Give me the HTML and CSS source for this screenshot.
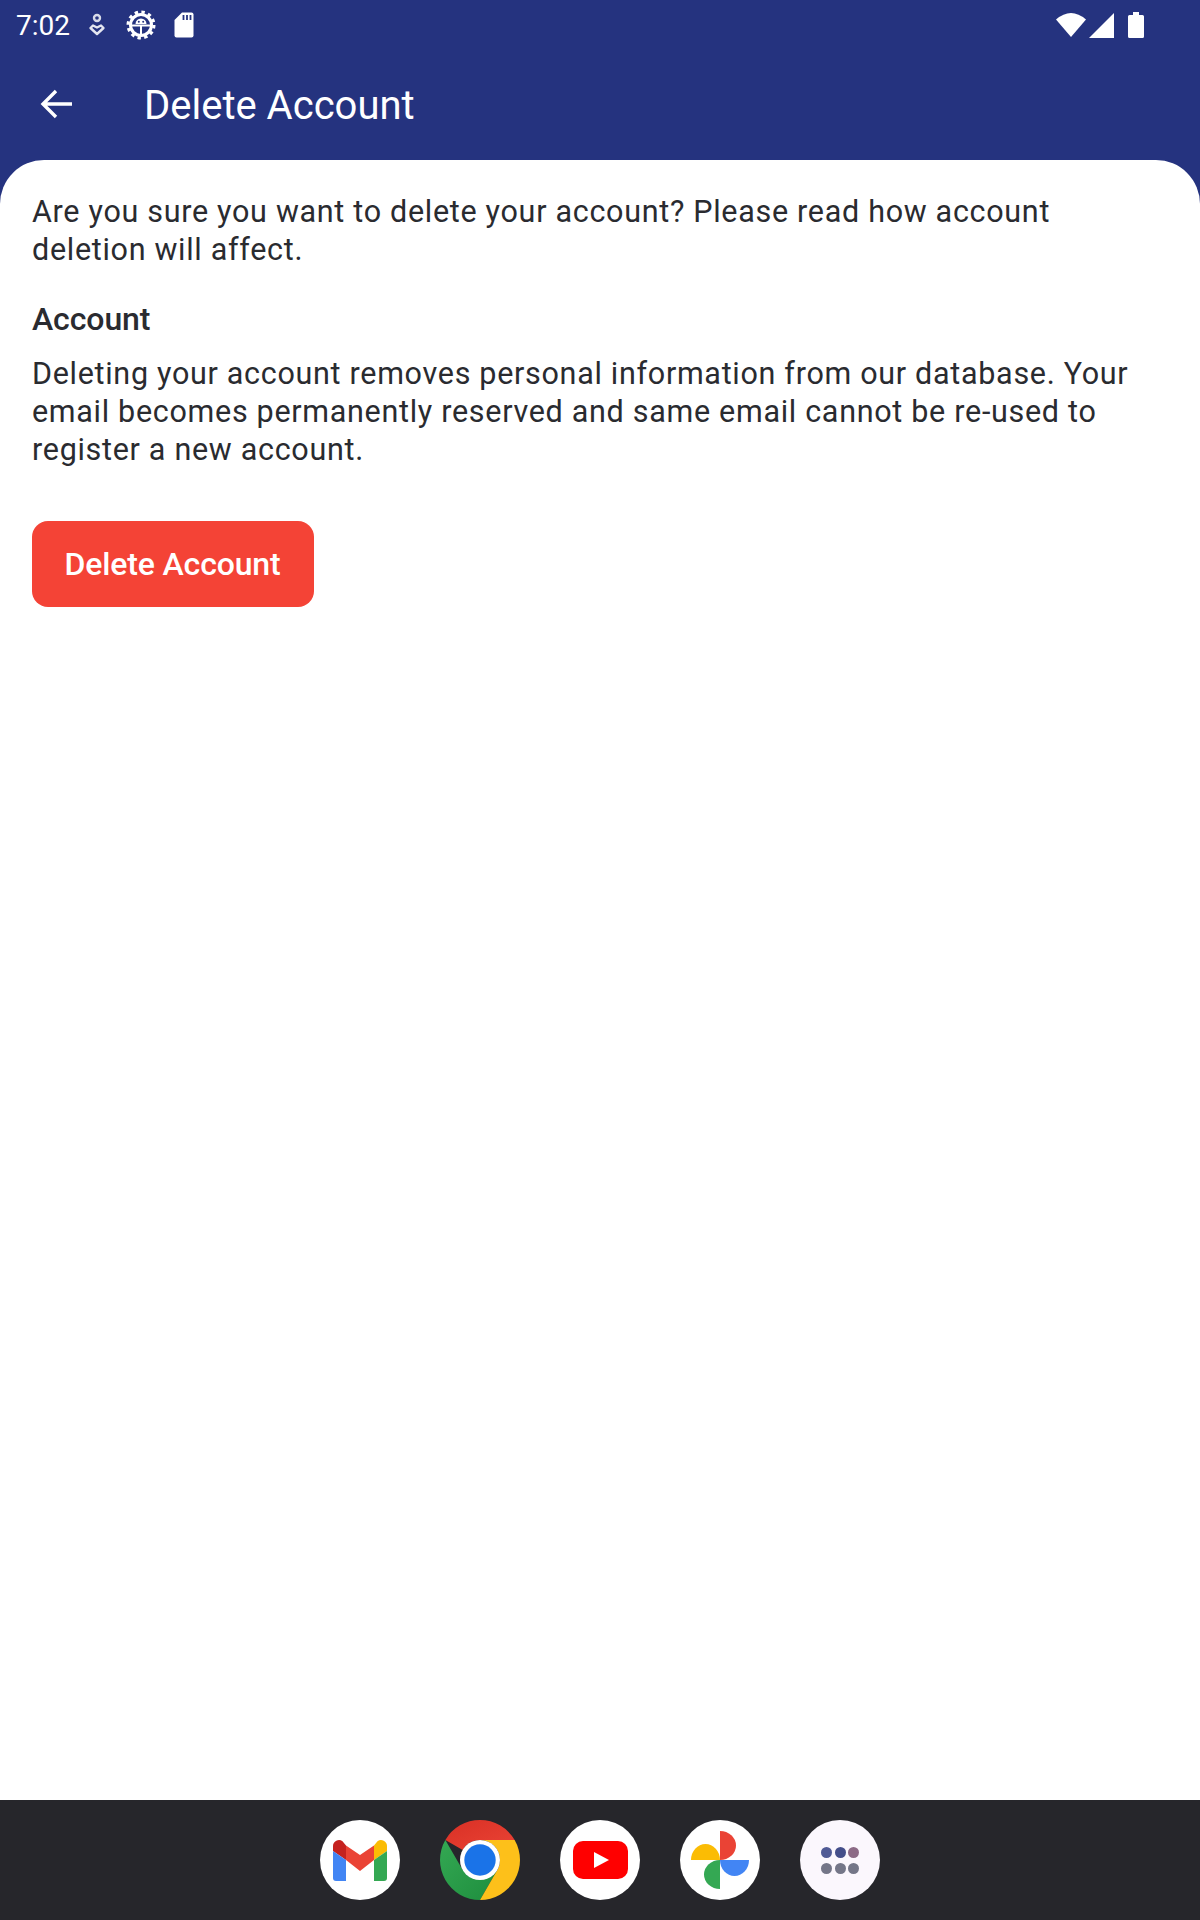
FILE: index.html
```html
<!DOCTYPE html>
<html lang="en">
<head>
<meta charset="utf-8">
<title>Delete Account</title>
<link rel="stylesheet" href="styles.css">
</head>
<body>
<div class="screen">
  <header class="top">
    <div class="status">
      <div class="status-left">
        <span class="time">7:02</span>
        <svg class="ic-drop" width="18" height="24" viewBox="0 0 18 24"><circle cx="9" cy="5" r="3" fill="none" stroke="#d8dbe9" stroke-width="2.4"/><path d="M5 12.5 L9 14.5 L13 12.5 L15.5 15 L9 21 L2.5 15 Z" fill="none" stroke="#e4e6f0" stroke-width="2.4" stroke-linejoin="round"/></svg>
        <svg class="ic-gear" width="30" height="30" viewBox="0 0 30 30"><circle cx="15" cy="15" r="10.500" fill="none" stroke="#fff" stroke-width="3"/><circle cx="15" cy="15" r="13" fill="none" stroke="#fff" stroke-width="3" stroke-dasharray="3.400 3.407"/><path d="M9.500 14a5.500 5.500 0 0 1 11 0z" fill="#fff"/><path d="M6 15.500h18M15 15.500v9" stroke="#fff" stroke-width="2"/><circle cx="12.800" cy="11.800" r="1" fill="#25337f"/><circle cx="17.200" cy="11.800" r="1" fill="#25337f"/></svg>
        <svg class="ic-sd" width="20" height="26" viewBox="0 0 20 26"><path d="M8 0.500H17.500A2 2 0 0 1 19.500 2.500V23.500A2 2 0 0 1 17.500 25.500H2.500A2 2 0 0 1 .5 23.500V8Z" fill="#fff"/><path d="M9.500 3v5M13 3v5M16.500 3v5" stroke="#25337f" stroke-width="1.800"/></svg>
      </div>
      <div class="status-right">
        <svg width="30" height="26" viewBox="0 0 30 26"><path d="M0 7.500Q15 -5.500 30 7.500L15 25Z" fill="#fff"/></svg>
        <svg width="25" height="25" viewBox="0 0 25 25"><path d="M25 0V25H0Z" fill="#fff"/></svg>
        <svg class="ic-batt" width="16" height="26" viewBox="0 0 16 26"><path d="M5 0H11V3H14.500A1.500 1.500 0 0 1 16 4.500V24.500A1.500 1.500 0 0 1 14.500 26H1.500A1.500 1.500 0 0 1 0 24.500V4.500A1.500 1.500 0 0 1 1.500 3H5Z" fill="#fff"/></svg>
      </div>
    </div>
    <div class="appbar">
      <svg class="back" width="32" height="32" viewBox="0 0 32 32"><path d="M33 16H3M16 3L3 16L16 29" fill="none" stroke="#fff" stroke-width="3.400"/></svg>
      <h1 class="title">Delete Account</h1>
    </div>
  </header>
  <main class="card">
    <p class="text">Are you sure you want to delete your account? Please read how account deletion will affect.</p>
    <h2 class="heading">Account</h2>
    <p class="text">Deleting your account removes personal information from our database. Your email becomes permanently reserved and same email cannot be re-used to register a new account.</p>
    <button class="danger" type="button">Delete Account</button>
  </main>
  <footer class="dock">
    <span class="app">
      <svg width="54" height="41" viewBox="0 0 54 41"><path d="M0 6a6 6 0 0 1 9.500-4.800L13 5.500V20L0 11Z" fill="#c5221f"/><path d="M13 5.500L27 15 41 5.500V20L27 31 13 20Z" fill="#ea4335"/><path d="M54 6a6 6 0 0 0-9.500-4.800L41 5.500V20L54 11Z" fill="#fbbc04"/><path d="M0 11L13 20V41H3a3 3 0 0 1-3-3Z" fill="#4285f4"/><path d="M54 11L41 20V41H51a3 3 0 0 0 3-3Z" fill="#34a853"/></svg>
    </span>
    <span class="app app-chrome">
      <svg width="80" height="80" viewBox="0 0 80 80"><defs><linearGradient id="cr" x1="0" y1="0" x2="1" y2="1"><stop offset="0" stop-color="#d93025"/><stop offset="1" stop-color="#ea4335"/></linearGradient><linearGradient id="cg" x1="0" y1="0" x2="1" y2="1"><stop offset="0" stop-color="#34a853"/><stop offset="1" stop-color="#1e8e3e"/></linearGradient></defs><path d="M40 0A40 40 0 0 1 74.640 20H40A20 20 0 0 0 22.700 30L5.360 20A40 40 0 0 1 40 0Z" fill="url(#cr)"/><path d="M5.360 20L22.700 50 57.300 50 40 80A40 40 0 0 1 5.360 20Z" fill="url(#cg)"/><path d="M74.640 20A40 40 0 0 1 40 80L57.300 50A20 20 0 0 0 40 20Z" fill="#fdc01a"/><circle cx="40" cy="40" r="20" fill="#fff"/><circle cx="40" cy="40" r="15.700" fill="#1a73e8"/></svg>
    </span>
    <span class="app">
      <svg width="55" height="40" viewBox="0 0 55 40"><rect width="55" height="38" y="1" rx="10" fill="#ff0000"/><path d="M21 12L36 20L21 28Z" fill="#fff"/></svg>
    </span>
    <span class="app">
      <svg width="58" height="58" viewBox="0 0 58 58"><path d="M29 29V0a16 14.500 0 0 1 0 29Z" fill="#ea4335"/><path d="M29 29H58a14.500 16 0 0 1-29 0Z" fill="#4285f4"/><path d="M29 29V58a16 14.500 0 0 1 0-29Z" fill="#34a853"/><path d="M29 29H0a14.500 16 0 0 1 29 0Z" fill="#fbbc04"/></svg>
    </span>
    <span class="app app-grid">
      <i class="dot d1"></i><i class="dot d1b"></i><i class="dot d2"></i><i class="dot d3"></i><i class="dot d3"></i><i class="dot d3"></i>
    </span>
  </footer>
</div>
</body>
</html>
```

FILE: styles.css
```css
* { box-sizing: border-box; }
html, body { margin: 0; padding: 0; }
body { font-family: Roboto, "Noto Sans", sans-serif; background: #fff; }
.screen { width: 1200px; height: 1920px; display: flex; flex-direction: column; overflow: hidden; background: #25337f; }
.top { height: 160px; flex: none; display: flex; flex-direction: column; color: #fff; }
.status { height: 50px; padding: 0 56px 0 16px; display: flex; justify-content: space-between; align-items: center; }
.status-left { display: flex; align-items: center; }
.time { font-size: 28px; line-height: 50px; padding-top: 1px; }
.ic-drop { margin-left: 18px; }
.ic-gear { margin-left: 20px; }
.ic-sd { margin-left: 18px; }
.status-right { display: flex; align-items: center; gap: 3px; }
.ic-batt { margin-left: 11px; }
.appbar { height: 110px; padding: 0 0 0 40px; display: flex; align-items: center; }
.back { flex: none; margin-bottom: 2px; }
.title { margin: 2px 0 0 72px; font-size: 40px; font-weight: 400; line-height: 50px; }
.card { flex: 1; background: #fff; border-radius: 44px 44px 0 0; padding: 33px 32px 0; }
.text { margin: 0; font-size: 30.5px; line-height: 38px; color: #2a2b30; letter-spacing: .7px; }
.heading { margin: 31px 0 17px; font-size: 32px; line-height: 38px; font-weight: 500; color: #2a2b30; letter-spacing: -.1px; }
.danger { display: block; margin-top: 52px; width: 282px; height: 86px; border: 0; border-radius: 16px; background: #f44336; color: #fff; font-family: inherit; font-size: 32px; font-weight: 500; letter-spacing: -.15px; padding: 0 1px 0 0; }
.dock { height: 120px; flex: none; background: #26262b; display: flex; justify-content: center; align-items: center; gap: 40px; }
.app { width: 80px; height: 80px; border-radius: 50%; background: #fff; display: flex; align-items: center; justify-content: center; flex: none; }
.app-chrome { background: none; }
.app-grid { background: #fbf7fd; display: grid; grid-template-columns: repeat(3, 11px); grid-auto-rows: 11px; column-gap: 2.4px; row-gap: 5px; place-content: center; }
.dot { border-radius: 50%; width: 11px; height: 11px; display: block; }
.d1 { background: #505a95; }
.d1b { background: #444e8a; }
.d2 { background: #8c6a86; }
.d3 { background: #747688; }
```
